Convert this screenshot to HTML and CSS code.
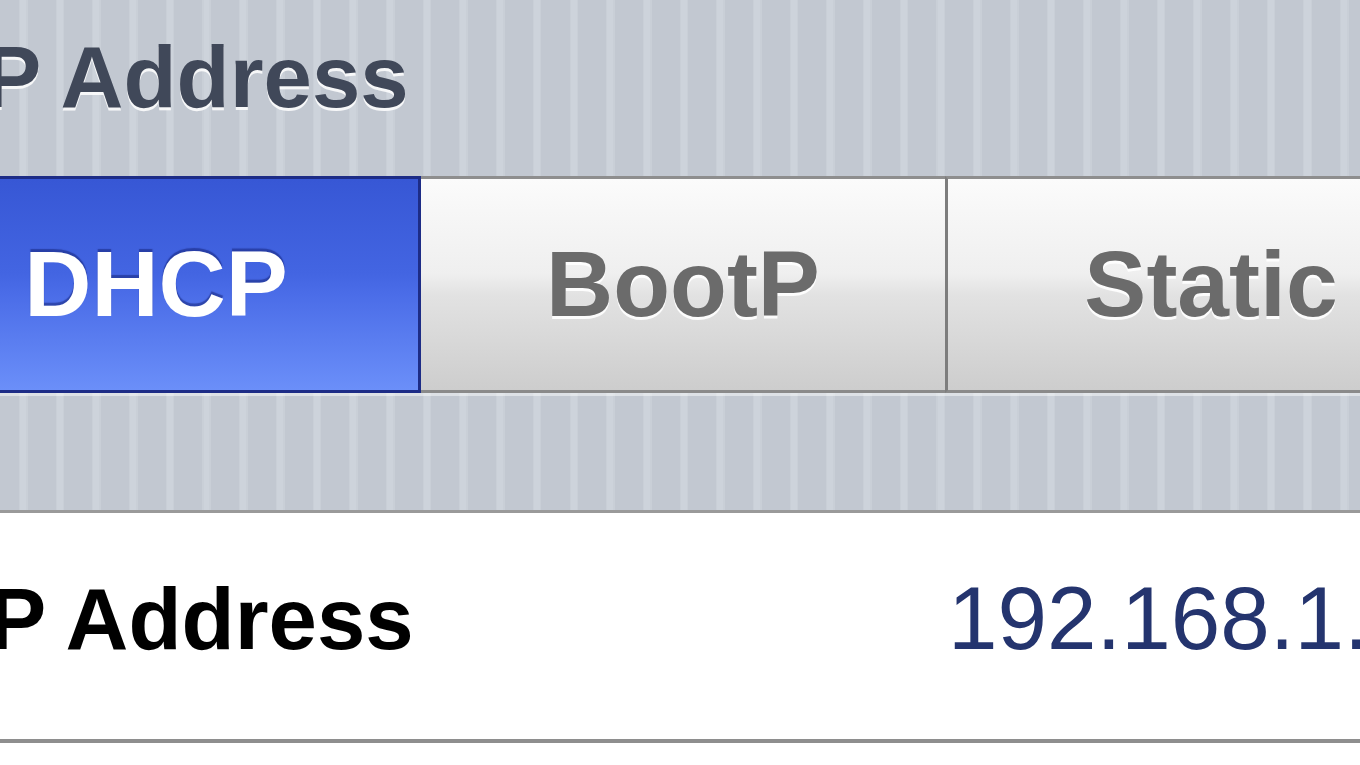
FILE: index.html
```html
<!DOCTYPE html>
<html>
<head>
    <title>IP Address</title>
    <link rel="stylesheet" href="styles.css">
</head>
<body>
    <div class="screen">
        <h2 class="group-title">IP Address</h2>

        <div class="segmented">
            <div class="segment selected">DHCP</div>
            <div class="segment">BootP</div>
            <div class="segment divided">Static</div>
        </div>

        <div class="cell">
            <span class="cell-label">IP Address</span>
            <span class="cell-value">192.168.1.100</span>
        </div>
        <div class="cell-rest"></div>
    </div>
</body>
</html>
```

FILE: styles.css
```css
body {
    margin: 0;
    width: 1360px;
    height: 765px;
    overflow: hidden;
    font-family: "Liberation Sans", Arial, sans-serif;
    background: repeating-linear-gradient(90deg, #c2c8d1 0 28px, #c9cfd7 28px 29px, #cdd3db 29px 35px, #c9cfd7 35px 36.7px);
    background-position: -9px 0;
}
.screen {
    width: 1360px;
}
.group-title {
    margin: 0 0 56px -41px;
    padding-top: 34px;
    font-size: 87px;
    line-height: 86px;
    font-weight: bold;
    color: #404859;
    text-shadow: 0 3px 0 rgba(255, 255, 255, 0.85);
    white-space: nowrap;
}
.segmented {
    display: flex;
    margin: 0 0 117px -106px;
    width: 1580px;
    height: 217px;
    box-shadow: 0 3px 0 rgba(255, 255, 255, 0.45);
}
.segment {
    box-sizing: border-box;
    width: 524px;
    height: 217px;
    display: flex;
    align-items: center;
    justify-content: center;
    font-size: 93px;
    font-weight: bold;
    color: #6b6b6b;
    text-shadow: 0 3px 0 rgba(255, 255, 255, 0.9);
    background: linear-gradient(#fbfbfb, #efefef 45%, #e2e2e2 55%, #cdcdcd);
    border-top: 3px solid #8e8e8e;
    border-bottom: 3px solid #8a8a8a;
}
.segment.selected {
    width: 527px;
    color: #fff;
    text-shadow: 0 -3px 1px rgba(20, 35, 120, 0.55);
    background: linear-gradient(#3757d5, #4365e2 45%, #4b6de8 55%, #6b8ff9);
    border: 3px solid #1d2c86;
    border-left: none;
}
.segment.divided {
    width: 529px;
    border-left: 3px solid #7d7d7d;
}
.cell {
    display: flex;
    align-items: baseline;
    box-sizing: border-box;
    height: 233px;
    padding-top: 62px;
    background: #fff;
    border-top: 3px solid #9a9a9a;
    border-bottom: 4px solid #8e8e8e;
    line-height: 86px;
    white-space: nowrap;
}
.cell-label {
    flex: none;
    width: 984px;
    margin-left: -36px;
    font-size: 87px;
    font-weight: bold;
    color: #000;
}
.cell-value {
    font-size: 89px;
    color: #24346e;
}
.cell-rest {
    height: 40px;
    background: #fff;
}
```
